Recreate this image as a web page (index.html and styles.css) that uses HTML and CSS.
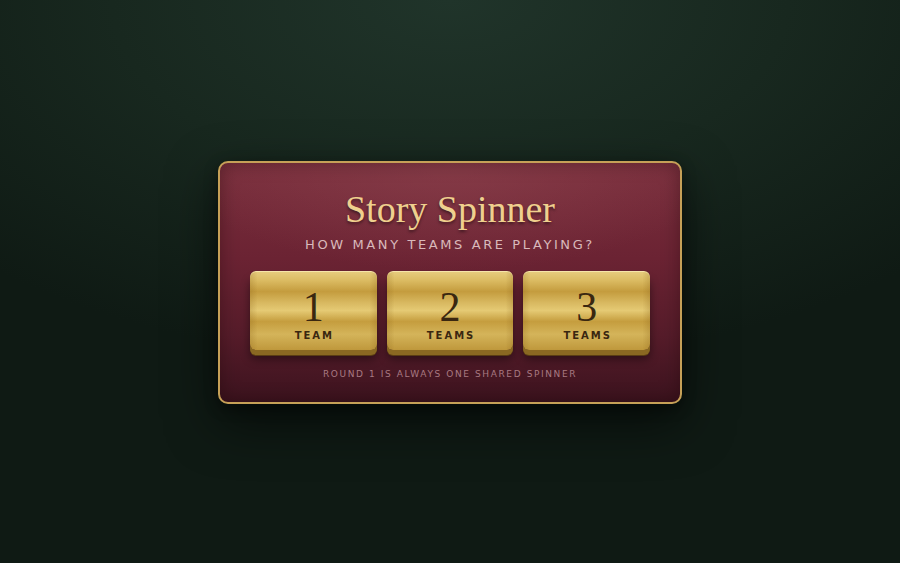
FILE: index.html
```html
<!DOCTYPE html>
<html lang="en">
<head>
<meta charset="utf-8">
<title>Story Spinner</title>
<link rel="stylesheet" href="styles.css">
</head>
<body>
<main class="stage">
  <section class="card">
    <h1 class="title">Story Spinner</h1>
    <p class="prompt">HOW MANY TEAMS ARE PLAYING?</p>
    <div class="choices">
      <button class="choice"><span class="num">1</span><span class="label">TEAM</span></button>
      <button class="choice"><span class="num">2</span><span class="label">TEAMS</span></button>
      <button class="choice"><span class="num">3</span><span class="label">TEAMS</span></button>
    </div>
    <p class="note">ROUND 1 IS ALWAYS ONE SHARED SPINNER</p>
  </section>
</main>
</body>
</html>
```
FILE: styles.css
```css
html, body {
  margin: 0;
  height: 100%;
}
body {
  background: radial-gradient(ellipse 75% 65% at 50% 0%, #20342a 0%, #18281f 50%, #0f1a14 100%);
  background-color: #0f1a14;
  font-family: "DejaVu Sans", sans-serif;
}
.stage {
  height: 563px;
  display: flex;
  align-items: center;
  justify-content: center;
}
.card {
  box-sizing: border-box;
  width: 464px;
  height: 243px;
  margin-top: 1px;
  border: 2px solid #c6a057;
  border-radius: 10px;
  background:
    radial-gradient(ellipse 60% 45% at 50% 0%, rgba(150, 75, 85, 0.45) 0%, rgba(150, 75, 85, 0) 100%),
    linear-gradient(180deg, #7a2f3d 0%, #6b2333 40%, #561c2a 72%, #3c131e 100%);
  box-shadow: 0 18px 50px rgba(0, 0, 0, 0.6), 0 4px 14px rgba(0, 0, 0, 0.35), inset 0 0 18px rgba(20, 0, 5, 0.35);
  padding: 24px 30px 0;
  display: flex;
  flex-direction: column;
  align-items: center;
}
.title {
  margin: 0;
  font-family: "Liberation Serif", serif;
  font-weight: normal;
  font-size: 38px;
  line-height: 44px;
  color: #efd08e;
  text-shadow: 0 2px 3px rgba(0, 0, 0, 0.45);
}
.prompt {
  margin: 6px 0 0;
  font-size: 13px;
  line-height: 16px;
  letter-spacing: 2.6px;
  color: #d9b9bb;
}
.choices {
  margin-top: 18px;
  display: flex;
  gap: 10px;
  width: 400px;
}
.choice {
  flex: 1;
  height: 79px;
  padding: 0;
  border: none;
  border-radius: 6px;
  background:
    linear-gradient(90deg, rgba(120, 80, 10, 0.2) 0%, rgba(120, 80, 10, 0) 6%, rgba(120, 80, 10, 0) 94%, rgba(120, 80, 10, 0.2) 100%),
    linear-gradient(180deg, #e8cd80 0%, #dbbb62 12%, #c49c3e 26%, #d8b860 40%, #e5ca74 50%, #c59d3e 64%, #d4b45a 80%, #bf983c 100%);
  box-shadow: 0 5px 0 #8a6822, 0 6px 0 #5a3d14, 0 9px 10px rgba(0, 0, 0, 0.45), inset 0 1px 0 rgba(255, 245, 200, 0.6);
  display: flex;
  flex-direction: column;
  align-items: center;
  font-family: inherit;
}
.num {
  margin-top: 14px;
  font-family: "Liberation Serif", serif;
  font-size: 42px;
  line-height: 44px;
  color: #3a2710;
}
.label {
  margin-top: 1px;
  font-size: 10px;
  font-weight: bold;
  letter-spacing: 2px;
  line-height: 12px;
  color: #3a2710;
  padding-left: 2px;
}
.note {
  margin: 18px 0 0;
  font-size: 9px;
  line-height: 12px;
  letter-spacing: 1.6px;
  color: #a87a82;
}
```
